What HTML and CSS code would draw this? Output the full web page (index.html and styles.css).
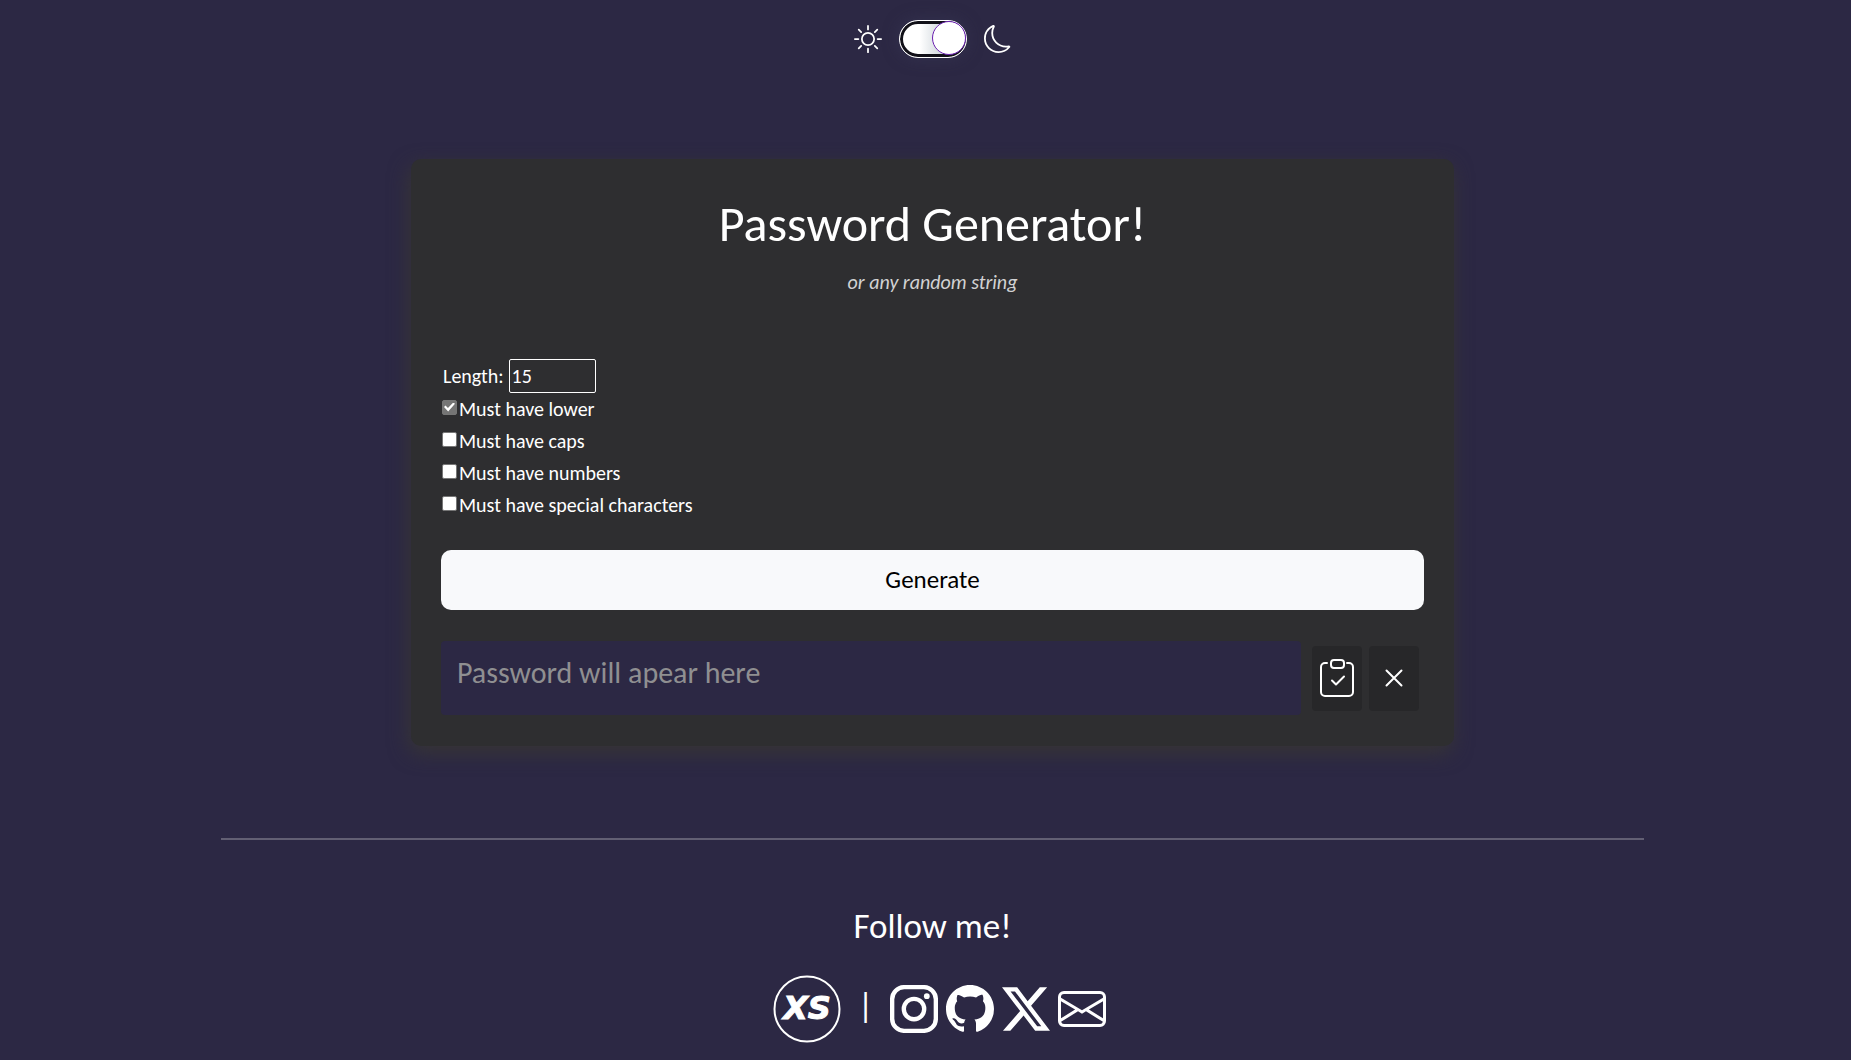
FILE: index.html
```html
<!DOCTYPE html>
<html lang="en">
<head>
<meta charset="utf-8">
<meta name="viewport" content="width=device-width, initial-scale=1">
<title>Password Generator</title>
<link rel="stylesheet" href="styles.css">
</head>
<body>
<header class="theme">
  <svg class="theme-icon" viewBox="0 0 16 16" fill="none" stroke="currentColor" stroke-linecap="round" aria-hidden="true"><circle cx="8" cy="8" r="3.5"/><path d="M8 .5v2M8 13.5v2M.5 8h2M13.5 8h2M2.7 2.7l1.4 1.4M11.9 11.9l1.4 1.4M2.7 13.3l1.4-1.4M11.9 4.1l1.4-1.4"/></svg>
  <input class="switch" type="checkbox" role="switch" aria-label="Dark mode" checked>
  <svg class="theme-icon" viewBox="0 0 16 16" fill="currentColor" aria-hidden="true"><path d="M6 .278a.77.770 0 0 1 .08.858 7.200 7.200 0 0 0-.878 3.460c0 4.021 3.278 7.277 7.318 7.277q.792-.001 1.533-.160a.790.790 0 0 1 .810.316.730.730 0 0 1-.031.893A8.350 8.350 0 0 1 8.344 16C3.734 16 0 12.286 0 7.710 0 4.266 2.114 1.312 5.124.060A.750.750 0 0 1 6 .278M4.858 1.311A7.270 7.270 0 0 0 1.025 7.710c0 4.020 3.279 7.276 7.319 7.276a7.320 7.320 0 0 0 5.205-2.162q-.506.063-1.029.063c-4.610 0-8.343-3.714-8.343-8.290 0-1.167.242-2.278.681-3.286"/></svg>
</header>
<main class="card">
  <h1 class="title">Password Generator!</h1>
  <p class="subtitle">or any random string</p>
  <form class="options">
    <div class="length"><label for="length">Length:</label><input class="length-input" id="length" type="text" inputmode="numeric" value="15"></div>
    <label class="option"><input type="checkbox" checked>Must have lower</label>
    <label class="option"><input type="checkbox">Must have caps</label>
    <label class="option"><input type="checkbox">Must have numbers</label>
    <label class="option"><input type="checkbox">Must have special characters</label>
    <button class="generate" type="button">Generate</button>
    <div class="result">
      <textarea class="output" aria-label="Password" placeholder="Password will apear here" readonly></textarea>
      <button class="tool" type="button" aria-label="Copy">
        <svg class="copy-icon" viewBox="0 0 34 38" fill="none" stroke="currentColor" stroke-width="2" stroke-linecap="round" stroke-linejoin="round" aria-hidden="true"><rect x="11" y="1" width="13" height="8" rx="3"/><path d="M7 4H5a4 4 0 0 0-4 4v25a4 4 0 0 0 4 4h24a4 4 0 0 0 4-4V8a4 4 0 0 0-4-4h-2M12 21.500l4 4 8-8"/></svg>
      </button>
      <button class="tool" type="button" aria-label="Clear">
        <svg class="clear-icon" viewBox="0 0 18 18" fill="none" stroke="currentColor" stroke-width="2" stroke-linecap="round" aria-hidden="true"><path d="M1.500 1.500l15 15M16.500 1.500l-15 15"/></svg>
      </button>
    </div>
  </form>
</main>
<hr class="divider">
<footer class="footer">
  <h2 class="follow">Follow me!</h2>
  <nav class="social">
    <a class="logo" href="#" aria-label="XS">
      <svg viewBox="0 0 68 68"><circle cx="34" cy="34" r="32.500" fill="none" stroke="currentColor" stroke-width="2"/><text class="logo-text" x="34" y="44" text-anchor="middle">XS</text></svg>
    </a>
    <span class="separator">|</span>
    <a class="link" href="#" aria-label="Instagram"><svg viewBox="0 0 16 16" fill="none" stroke="currentColor" stroke-width="1.450"><rect x=".72" y=".72" width="14.560" height="14.560" rx="4"/><circle cx="8" cy="8" r="3.400"/><circle cx="12.270" cy="3.730" r=".96" fill="currentColor" stroke="none"/></svg></a>
    <a class="link" href="#" aria-label="GitHub"><svg viewBox="0 0 16 16" fill="currentColor"><path d="M8 0C3.580 0 0 3.580 0 8c0 3.540 2.290 6.530 5.470 7.590.4.070.55-.17.55-.38 0-.19-.01-.82-.01-1.490-2.010.37-2.530-.49-2.690-.94-.09-.23-.48-.94-.82-1.130-.28-.15-.68-.52-.01-.53.63-.01 1.080.58 1.230.82.72 1.210 1.870.87 2.330.66.07-.52.28-.87.51-1.070-1.780-.2-3.640-.89-3.640-3.950 0-.87.31-1.590.82-2.150-.08-.2-.36-1.020.08-2.120 0 0 .67-.21 2.200.82.64-.18 1.320-.27 2-.27s1.360.09 2 .27c1.530-1.040 2.200-.82 2.200-.82.44 1.100.16 1.920.08 2.120.51.56.82 1.270.82 2.150 0 3.070-1.870 3.750-3.650 3.950.29.25.54.73.54 1.480 0 1.070-.01 1.930-.01 2.200 0 .21.15.46.55.38A8.010 8.010 0 0 0 16 8c0-4.420-3.580-8-8-8"/></svg></a>
    <a class="link" href="#" aria-label="X"><svg viewBox="0 0 16 16" fill="currentColor"><path d="M12.600.750h2.454l-5.360 6.142L16 15.250h-4.937l-3.867-5.070-4.425 5.070H.316l5.733-6.570L0 .750h5.063l3.495 4.633L12.601.750Zm-.860 13.028h1.360L4.323 2.145H2.865z"/></svg></a>
    <a class="link" href="#" aria-label="Email"><svg viewBox="0 0 16 16" fill="currentColor"><path d="M0 4a2 2 0 0 1 2-2h12a2 2 0 0 1 2 2v8a2 2 0 0 1-2 2H2a2 2 0 0 1-2-2zm2-1a1 1 0 0 0-1 1v.217l7 4.200 7-4.200V4a1 1 0 0 0-1-1zm13 2.383-4.708 2.825L15 11.105zm-.034 6.876-5.640-3.471L8 9.583l-1.326-.795-5.640 3.470A1 1 0 0 0 2 13h12a1 1 0 0 0 .966-.741M1 11.105l4.708-2.897L1 5.383z"/></svg></a>
  </nav>
</footer>
</body>
</html>
```
FILE: styles.css
```css
* { box-sizing: border-box; }

body {
  margin: 0;
  padding: 20px 0 16px 14px;
  background: #2c2844;
  color: #fff;
  font-family: Carlito, Lato, sans-serif;
  font-size: 20px;
  line-height: 24px;
}

svg { display: block; }

input, textarea, button { font: inherit; color: inherit; }

.theme {
  display: flex;
  justify-content: center;
  align-items: center;
  gap: 17px;
}

.theme-icon { width: 28px; height: 28px; }

.switch {
  appearance: none;
  display: flex;
  justify-content: flex-end;
  align-items: center;
  width: 68px;
  height: 38px;
  margin: 0;
  padding: 0 0 2px;
  border: 1px solid #fff;
  border-radius: 19px;
  background: linear-gradient(90deg, #fff 30%, #d4dadf 60%);
  box-shadow: inset 0 0 0 3px #111018, 0 0 16px rgba(60, 60, 90, .5);
}

.switch::before {
  content: "";
  width: 32px;
  height: 32px;
  border: 1px solid #6a1fb0;
  border-radius: 50%;
  background: #fff;
}

.card {
  width: 57%;
  min-width: 320px;
  max-width: 1043px;
  margin: 101px auto 0;
  padding: 33px 30px 31px;
  border-radius: 10px;
  background: #2e2e30;
  box-shadow: -2px 7px 20px #373535;
}

.title {
  margin: 0;
  font-size: 50px;
  font-weight: 400;
  line-height: 64px;
  text-align: center;
}

.subtitle {
  margin: 14px 0 65px;
  color: #d2d2d3;
  font-style: italic;
  text-align: center;
}

.length {
  display: flex;
  align-items: center;
  gap: 5px;
  padding-left: 2px;
}

.length-input {
  width: 87px;
  height: 34px;
  padding: 0 2px;
  border: 1px solid #fff;
  border-radius: 2px;
  background: transparent;
}

.option {
  display: flex;
  gap: 2px;
  width: fit-content;
  height: 32px;
  align-items: center;
}

.option input {
  appearance: none;
  display: grid;
  place-items: center;
  width: 15px;
  height: 15px;
  margin: 0 0 4px 1px;
  border: 1px solid #767676;
  border-radius: 2px;
  background: #fff;
}

.option input:checked { background: #757575; }

.option input:checked::before {
  content: "";
  width: 11px;
  height: 9px;
  background: #fff;
  clip-path: polygon(0 50%, 14% 34%, 36% 60%, 84% 0, 100% 14%, 38% 100%);
}

.generate {
  width: 100%;
  height: 60px;
  margin: 29px 0 31px;
  border: 0;
  border-radius: 10px;
  background: #f8f9fb;
  color: #000;
  font-size: 25px;
}

.result {
  display: flex;
  align-items: center;
  gap: 7px;
  padding-right: 5px;
}

.output {
  flex: 1;
  min-width: 0;
  height: 74px;
  margin-right: 4px;
  padding: 16px;
  border: 0;
  border-radius: 4px;
  background: #2c2844;
  font-size: 30px;
  line-height: 32px;
  resize: none;
}

.output::placeholder { color: #8f8f91; opacity: 1; }

.tool {
  display: grid;
  place-items: center;
  width: 50px;
  height: 65px;
  padding: 0;
  border: 0;
  border-radius: 4px;
  background: #272729;
}

.copy-icon { width: 34px; height: 38px; }

.clear-icon { width: 18px; height: 18px; }

.divider {
  width: calc(77% + 8px);
  height: 2px;
  margin: 92px auto 65px;
  border: 0;
  background: #625f73;
}

.follow {
  margin: 0 0 28px;
  font-size: 35px;
  font-weight: 400;
  line-height: 42px;
  text-align: center;
}

.social {
  display: flex;
  justify-content: center;
  align-items: center;
  gap: 8px;
  padding-left: 14px;
}

.social a { color: #fff; }

.logo { width: 68px; }

.logo-text {
  fill: #fff;
  stroke: #fff;
  stroke-width: 1px;
  font-family: "DejaVu Sans", sans-serif;
  font-size: 32px;
  font-style: italic;
  font-weight: 700;
}

.separator {
  margin: 0 8px 8px;
  font-size: 35px;
}

.link { width: 48px; }
```
